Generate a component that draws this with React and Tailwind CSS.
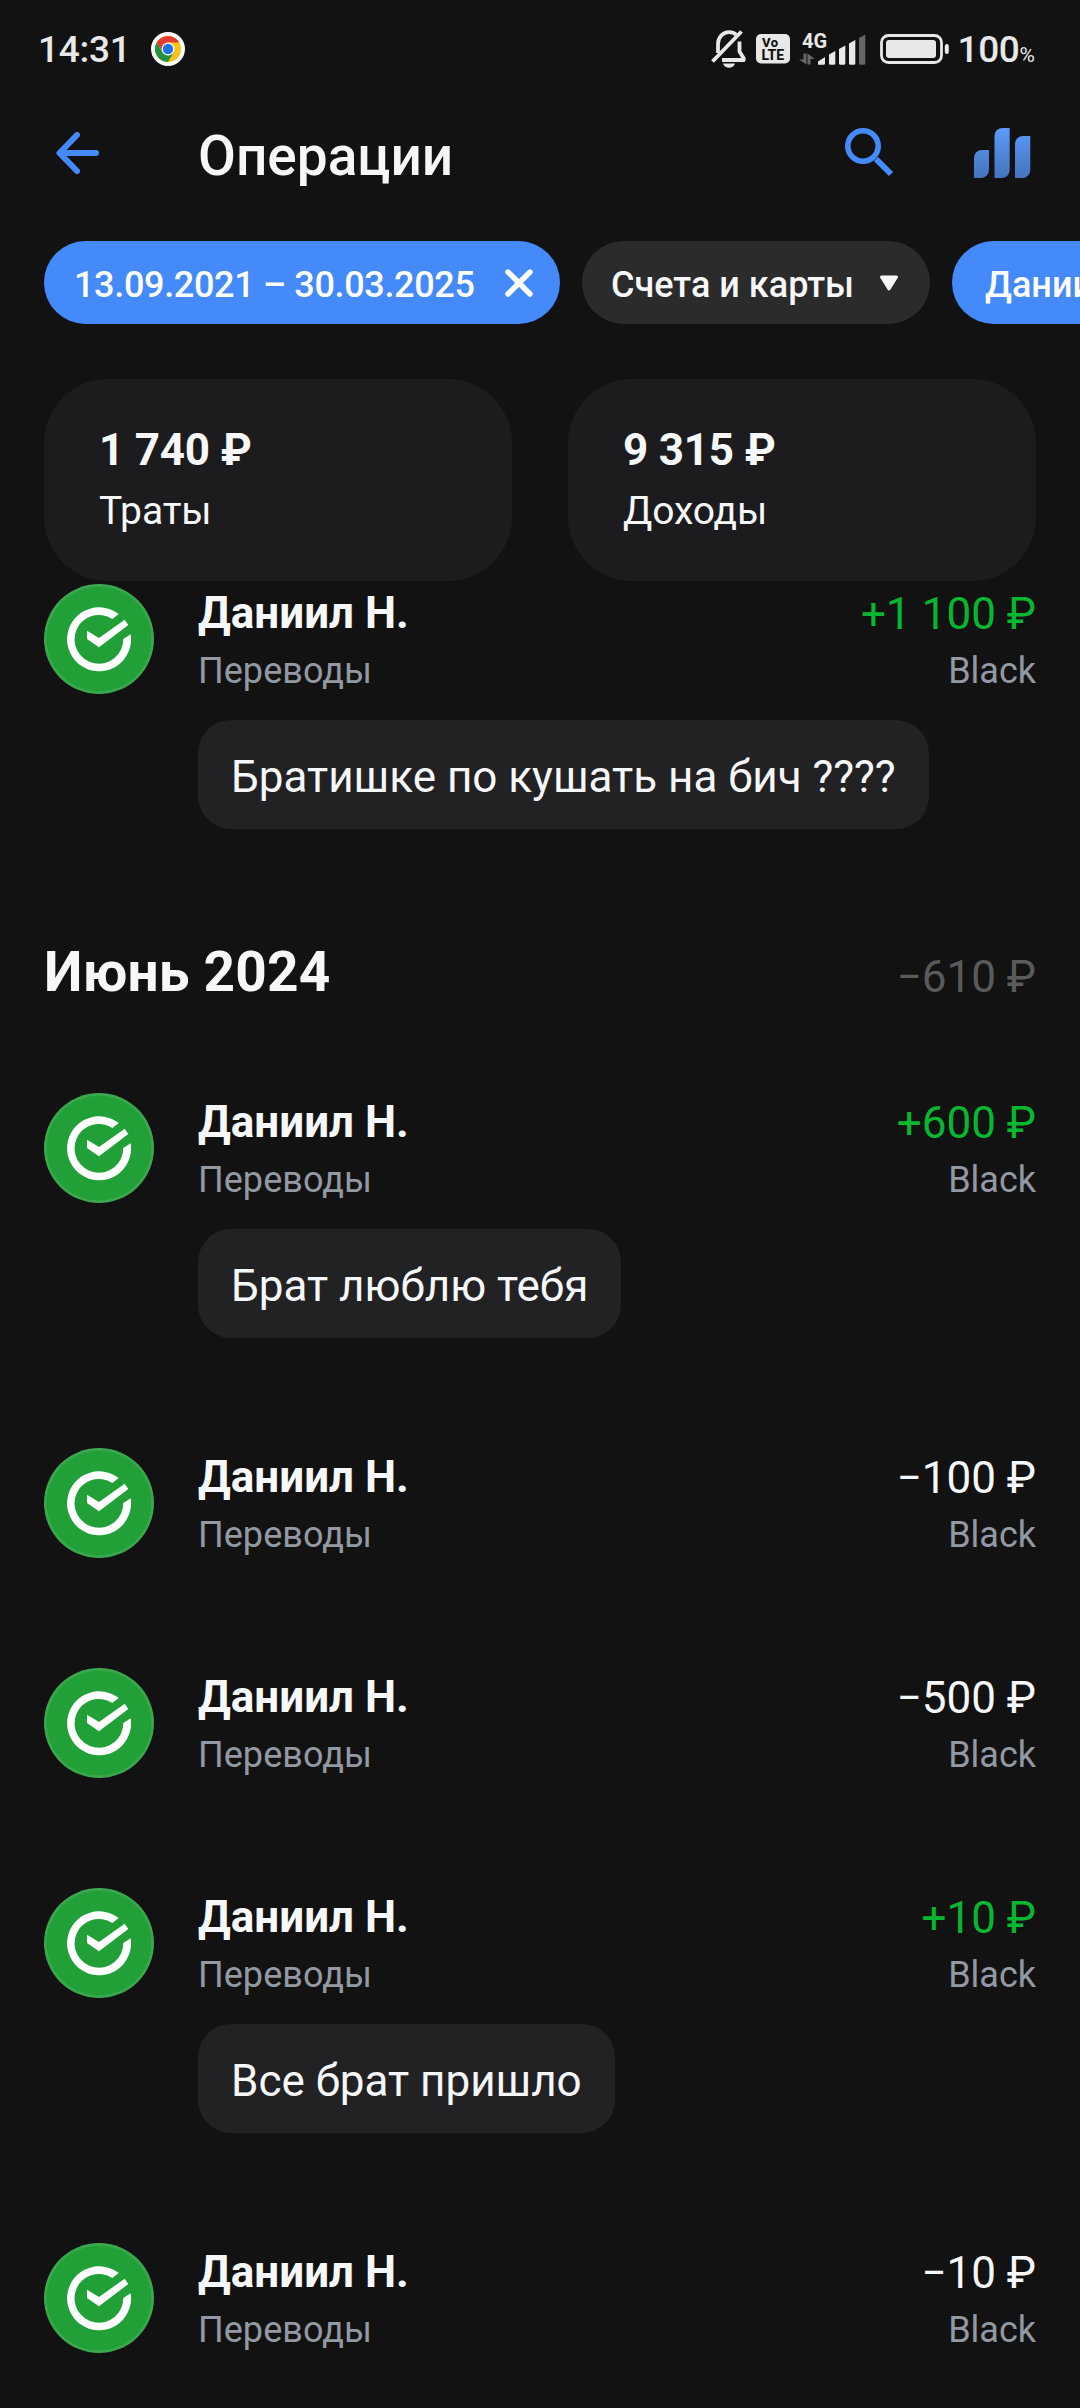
const operations = [
  {
    id: 1,
    name: "Даниил Н.",
    category: "Переводы",
    amount: "+1 100 ₽",
    income: true,
    message: "Братишке по кушать на бич ????"
  },
  {
    id: 2,
    name: "Даниил Н.",
    category: "Переводы",
    amount: "+600 ₽",
    income: true,
    message: "Брат люблю тебя"
  },
  { id: 3, name: "Даниил Н.", category: "Переводы", amount: "−100 ₽" },
  { id: 4, name: "Даниил Н.", category: "Переводы", amount: "−500 ₽" },
  {
    id: 5,
    name: "Даниил Н.",
    category: "Переводы",
    amount: "+10 ₽",
    income: true,
    message: "Все брат пришло"
  },
  { id: 6, name: "Даниил Н.", category: "Переводы", amount: "−10 ₽" }
];

function ChromeIcon() {
  return (
    <svg width="34" height="34" viewBox="0 0 34 34">
      <circle cx="17" cy="17" r="17" fill="#fff" />
      <circle cx="17" cy="17" r="13" fill="#fbc116" />
      <path d="M5.74 10.5A13 13 0 0 1 28.26 10.5L17 10.5L11.4 20.2Z" fill="#e33b2e" />
      <path d="M5.74 10.5A13 13 0 0 0 17 30L22.6 20.2L11.4 20.2Z" fill="#229342" />
      <circle cx="17" cy="17" r="6.5" fill="#fff" />
      <circle cx="17" cy="17" r="5.2" fill="#1a73e8" />
    </svg>
  );
}

function BellOffIcon() {
  return (
    <svg width="36" height="38" viewBox="0 0 36 38" fill="none" stroke="#e8e8e8" strokeWidth="3.8">
      <path d="M7 23V14.5C7 7 12 2.2 18 2.2C21 2.2 23.5 3.2 25.3 4.8" />
      <path d="M28.5 11.5V21.5L32.7 28.2V30H11" strokeLinejoin="round" />
      <path d="M30.5 1.5L1.5 31.5" />
      <path d="M12 33.5H24C23 36.5 20.5 37.8 18 37.8C15.5 37.8 13 36.5 12 33.5Z" fill="#e8e8e8" stroke="none" />
    </svg>
  );
}

function SignalIcon() {
  return (
    <svg className="overflow-visible" width="67" height="34" viewBox="0 0 67 34">
      <text x="3" y="15.5" fontSize="20" fontWeight="700" fill="#e8e8e8">4G</text>
      <g fill="#666">
        <path d="M4.5 21.5H7.5V32.5L0 27.5H4.5Z" />
        <path d="M8.5 32.5H11.5V27H16L8.5 21.5Z" />
      </g>
      <g fill="#e8e8e8">
        <path d="M19 32.7V29.5L26 25V31.2Q26 32.7 24.5 32.7Z" />
        <path d="M30 22.5L36.3 19V31.2Q36.3 32.7 34.8 32.7H31.5Q30 32.7 30 31.2Z" />
        <path d="M40 17L46.3 13.5V31.2Q46.3 32.7 44.8 32.7H41.5Q40 32.7 40 31.2Z" />
        <path d="M50 11.5L56.3 8V31.2Q56.3 32.7 54.8 32.7H51.5Q50 32.7 50 31.2Z" />
      </g>
      <path d="M60 6L66.3 2.5V31.2Q66.3 32.7 64.8 32.7H61.5Q60 32.7 60 31.2Z" fill="#666" />
    </svg>
  );
}

function BatteryIcon() {
  return (
    <svg width="70" height="30" viewBox="0 0 70 30">
      <rect x="1.5" y="1.5" width="60" height="27" rx="7" fill="none" stroke="#e8e8e8" strokeWidth="2.8" />
      <rect x="6" y="6" width="50" height="18" rx="3" fill="#e8e8e8" />
      <rect x="64.8" y="10" width="4" height="10" rx="2" fill="#e8e8e8" />
    </svg>
  );
}

function StatusBar() {
  return (
    <div className="flex h-[98px] items-center justify-between pl-[38px] pr-[45px] text-[#e8e8e8]">
      <div className="flex items-center">
        <span className="mt-0.5 w-[113px] text-[37px] leading-[44px] font-medium tracking-[-0.3px]">14:31</span>
        <ChromeIcon />
      </div>
      <div className="flex items-center">
        <BellOffIcon />
        <svg className="ml-[9px]" width="34" height="30" viewBox="0 0 34 30">
          <rect width="34" height="29.5" rx="5" fill="#e8e8e8" />
          <text x="6" y="13" fontSize="13" fontWeight="800" fill="#121212" letterSpacing="0.5">Vo</text>
          <text x="5.5" y="26" fontSize="14" fontWeight="800" fill="#121212">LTE</text>
        </svg>
        <div className="ml-[9px]"><SignalIcon /></div>
        <div className="ml-[14px]"><BatteryIcon /></div>
        <div className="ml-[7px] mt-0.5 flex items-baseline">
          <span className="text-[37px] leading-[44px] font-medium tracking-[-0.3px]">100</span>
          <span className="text-[21px]">%</span>
        </div>
      </div>
    </div>
  );
}

function Header() {
  return (
    <div className="flex h-[143px] items-start px-[44px]">
      <svg className="ml-[11px] mt-[34px]" width="44" height="42" viewBox="0 0 44 42" fill="none" stroke="#448afb" strokeWidth="6" strokeLinecap="round" strokeLinejoin="round">
        <path d="M22 3L4.5 21L22 39M5 21H41" />
      </svg>
      <h1 className="ml-[99px] mt-[26px] flex-1 text-[55px] leading-[64px] font-medium text-[#f6f7f8]">
        Операции
      </h1>
      <svg className="mt-[30px]" width="49" height="49" viewBox="0 0 49 49" fill="none" stroke="#448afb">
        <circle cx="18" cy="18" r="15.2" strokeWidth="5.6" />
        <path d="M31 31L46 46" strokeWidth="6" />
      </svg>
      <svg className="ml-20 mr-[5px] mt-[30px]" width="57" height="50" viewBox="0 0 57 50">
        <defs>
          <linearGradient id="bars" x1="0" y1="0" x2="0" y2="50" gradientUnits="userSpaceOnUse">
            <stop stopColor="#5c9bfa" />
            <stop offset="1" stopColor="#4474bd" />
          </linearGradient>
        </defs>
        <g fill="url(#bars)">
          <path d="M0 50V30A8 8 0 0 1 8 22H15V42A8 8 0 0 1 7 50Z" />
          <path d="M20.5 50V8A8 8 0 0 1 28.5 0H35.7V42A8 8 0 0 1 27.7 50Z" />
          <path d="M41 50V16A8 8 0 0 1 49 8H56.3V42A8 8 0 0 1 48.3 50Z" />
        </g>
      </svg>
    </div>
  );
}

function Filters() {
  return (
    <div className="flex gap-[22px] overflow-hidden pl-[44px] text-[36px] leading-[44px] font-medium">
      <div className="flex h-[83px] w-[516px] shrink-0 items-center rounded-full bg-[#448afb] pl-[30px] pt-1 text-white">
        <span className="w-[431px] tracking-[-0.34px] whitespace-nowrap">13.09.2021 – 30.03.2025</span>
        <svg className="-mt-1" width="28" height="28" viewBox="0 0 28 28" stroke="#fff" strokeWidth="5.4" strokeLinecap="round">
          <path d="M3 3L25 25M25 3L3 25" />
        </svg>
      </div>
      <div className="flex h-[83px] w-[348px] shrink-0 items-center rounded-full bg-[#2b2b2b] pl-[29px] pt-1 text-[#f6f7f8]">
        <span className="w-[268px] whitespace-nowrap">Счета и карты</span>
        <svg className="-mt-0.5" width="20" height="17" viewBox="0 0 20 17">
          <path d="M2.5 2H17.5L10 14Z" fill="#f6f7f8" stroke="#f6f7f8" strokeWidth="3" strokeLinejoin="round" />
        </svg>
      </div>
      <div className="flex h-[83px] w-[260px] shrink-0 items-center rounded-full bg-[#448afb] pl-[33px] pt-1 text-white">
        Даниил Н.
      </div>
    </div>
  );
}

function SummaryCard({ amount, label }) {
  return (
    <div className="h-[202px] flex-1 rounded-[64px] bg-[#1c1c1e] pl-[55px] pt-[45px] text-[#f6f7f8]">
      <p className="text-[44px] leading-[52px] font-bold tracking-[-0.2px]">{amount}</p>
      <p className="mt-3 text-[39px] leading-[46px] tracking-[-0.1px]">{label}</p>
    </div>
  );
}

function BankAvatar() {
  return (
    <svg className="shrink-0" width="110" height="110" viewBox="0 0 110 110">
      <circle cx="55" cy="55" r="55" fill="#3ba74d" />
      <circle cx="55" cy="55" r="52.3" fill="#21a038" />
      <path d="M74.7 30A32 32 0 1 0 86.7 50.3L79.3 55A24.4 24.4 0 1 1 68.3 34.9Z" fill="#fff" />
      <path d="M43 46.7L55 54L80.7 35.7L84.3 41L55 63.3L43 55Z" fill="#fff" />
    </svg>
  );
}

function Operation({ item }) {
  return (
    <div className="flex pb-[110px]">
      <BankAvatar />
      <div className="ml-[44px] flex-1">
        <div className="flex h-[110px] justify-between pt-[3px]">
          <div>
            <p className="text-[44px] leading-[52px] font-bold text-[#f6f7f8]">{item.name}</p>
            <p className="mt-2.5 text-[36px] leading-[44px] tracking-[0.05px] text-[#9299a2]">{item.category}</p>
          </div>
          <div className="pt-px text-right">
            <p className={item.income ? "text-[44px] leading-[52px] text-[#08b730]" : "text-[44px] leading-[52px] text-[#f6f7f8]"}>
              {item.amount}
            </p>
            <p className="mt-[9px] text-[36px] leading-[44px] text-[#9299a2]">Black</p>
          </div>
        </div>
        {item.message && (
          <div className="mt-[26px] flex h-[109px] w-fit items-center rounded-[33px] bg-[#222224] px-[33px] pt-1 text-[44px] text-[#f6f7f8]">
            {item.message}
          </div>
        )}
      </div>
    </div>
  );
}

export default function App() {
  return (
    <div className="h-[2408px] w-[1080px] overflow-hidden bg-[#121212] font-['Roboto',sans-serif]">
      <StatusBar />
      <Header />
      <Filters />
      <div className="mt-[55px] flex gap-14 px-[44px]">
        <SummaryCard amount="1 740 ₽" label="Траты" />
        <SummaryCard amount="9 315 ₽" label="Доходы" />
      </div>
      <div className="px-[44px] pt-[3px]">
        <Operation item={operations[0]} />
        <div className="flex h-[154px] items-start justify-between pt-px">
          <h2 className="text-[55px] leading-[64px] font-bold tracking-[0.2px] text-[#f6f7f8]">Июнь 2024</h2>
          <span className="mt-[11px] text-[44px] leading-[52px] text-[#5a5a5a]">−610 ₽</span>
        </div>
        {operations.slice(1).map((item) => (
          <Operation key={item.id} item={item} />
        ))}
      </div>
    </div>
  );
}
